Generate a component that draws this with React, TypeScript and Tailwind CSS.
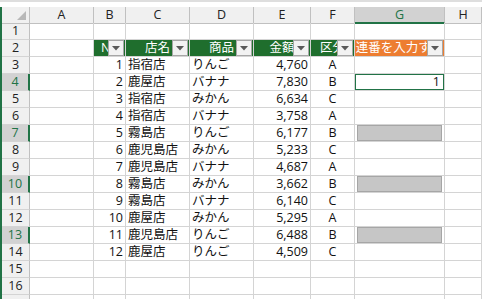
const rows = [
  [1, "指宿店", "りんご", "4,760", "A"],
  [2, "鹿屋店", "バナナ", "7,830", "B"],
  [3, "指宿店", "みかん", "6,634", "C"],
  [4, "指宿店", "バナナ", "3,758", "A"],
  [5, "霧島店", "りんご", "6,177", "B"],
  [6, "鹿児島店", "みかん", "5,233", "C"],
  [7, "鹿児島店", "バナナ", "4,687", "A"],
  [8, "霧島店", "みかん", "3,662", "B"],
  [9, "霧島店", "バナナ", "6,140", "C"],
  [10, "鹿屋店", "みかん", "5,295", "A"],
  [11, "鹿児島店", "りんご", "6,488", "B"],
  [12, "鹿屋店", "りんご", "4,509", "C"],
];

const cols = ["A", "B", "C", "D", "E", "F", "G", "H"];
const grid = "grid grid-cols-[28px_64px_32px_64px_64px_57px_44px_90px_1fr]";
const selectedRows = [4, 7, 10, 13];

const Dropdown = () => (
  <div className="absolute right-[1px] top-0 w-[16px] h-[16px] bg-[#f2f2f2] border border-[#a6a6a6] flex items-center justify-center">
    <svg width="8" height="5" viewBox="0 0 8 5">
      <path d="M0 0 L8 0 L4 4.5 Z" fill="#595959" />
    </svg>
  </div>
);

const HeadCell = ({ label, orange }: { label: string; orange?: boolean }) => (
  <div
    className={`relative h-[17px] border-b border-r border-[#d4d4d4] overflow-hidden ${
      orange ? "bg-[#ed7d31]" : "bg-[#1f6e2d]"
    }`}
  >
    <div className="h-[16px] leading-[16px] text-center text-white whitespace-nowrap">
      {label}
    </div>
    <Dropdown />
  </div>
);

const Cell = ({
  children,
  className = "",
}: {
  children?: React.ReactNode;
  className?: string;
}) => (
  <div
    className={`h-[17px] leading-[16px] border-b border-r border-[#d4d4d4] px-[2px] whitespace-nowrap overflow-hidden ${className}`}
  >
    {children}
  </div>
);

const RowHead = ({ n }: { n: number }) => {
  const sel = selectedRows.includes(n);
  return (
    <div
      className={`h-[17px] leading-[16px] text-center border-b border-[#d4d4d4] ${
        sel
          ? "bg-[#d2d2d2] text-[#217346] border-r-2 border-r-[#217346]"
          : "bg-[#f0f0f0] text-[#222] border-r border-r-[#c0c0c0]"
      }`}
    >
      {n <= 16 ? n : ""}
    </div>
  );
};

export default function App() {
  const body = [];
  for (let r = 1; r <= 17; r++) {
    const cells: React.ReactNode[] = [<RowHead key="h" n={r} />];
    cells.push(<Cell key="a" />);
    if (r === 2) {
      cells.push(<HeadCell key="b" label="No" />);
      cells.push(<HeadCell key="c" label="店名" />);
      cells.push(<HeadCell key="d" label="商品" />);
      cells.push(<HeadCell key="e" label="金額" />);
      cells.push(<HeadCell key="f" label="区分" />);
      cells.push(<HeadCell key="g" label="連番を入力する" orange />);
    } else if (r >= 3 && r <= 14) {
      const d = rows[r - 3];
      cells.push(
        <Cell key="b" className="text-right">
          {d[0]}
        </Cell>
      );
      cells.push(<Cell key="c">{d[1]}</Cell>);
      cells.push(<Cell key="d">{d[2]}</Cell>);
      cells.push(
        <Cell key="e" className="text-right">
          {d[3]}
        </Cell>
      );
      cells.push(
        <Cell key="f" className="text-center">
          {d[4]}
        </Cell>
      );
      if (r === 4) {
        cells.push(
          <Cell key="g" className="relative">
            <div className="absolute inset-[-1px] border-2 border-[#217346] text-right pr-[3px] leading-[14px]">
              1
            </div>
          </Cell>
        );
      } else if (r === 7 || r === 10 || r === 13) {
        cells.push(
          <Cell key="g" className="p-0">
            <div className="h-[16px] bg-[#c6c6c6] border border-[#a6a6a6]" />
          </Cell>
        );
      } else {
        cells.push(<Cell key="g" />);
      }
    } else {
      cells.push(<Cell key="b" />, <Cell key="c" />, <Cell key="d" />, <Cell key="e" />, <Cell key="f" />, <Cell key="g" />);
    }
    cells.push(<Cell key="hh" />);
    body.push(
      <div key={r} className={grid}>
        {cells}
      </div>
    );
  }

  return (
    <div
      className="w-[482px] h-[299px] overflow-hidden bg-white text-[12.5px] text-[#111]"
      style={{ fontFamily: '"Open Sans", "Noto Sans CJK JP", sans-serif' }}
    >
      <div className="h-[7px] border-t-2 border-[#dedede] bg-white" />
      <div className="border-l-2 border-[#217346]">
        <div className={`${grid} h-[16px]`}>
          <div className="relative bg-[#f0f0f0] border-r border-b border-[#c0c0c0]">
            <svg className="absolute right-[3px] bottom-[3px]" width="9" height="9" viewBox="0 0 9 9">
              <path d="M9 0 L9 9 L0 9 Z" fill="#b8b8b8" />
            </svg>
          </div>
          {cols.map((c) => (
            <div
              key={c}
              className={`leading-[15px] text-center ${
                c === "G"
                  ? "bg-[#d2d2d2] text-[#217346] border-b-2 border-[#217346] border-r border-r-[#c0c0c0]"
                  : "bg-[#f0f0f0] text-[#222] border-b border-r border-[#c0c0c0]"
              }`}
            >
              {c}
            </div>
          ))}
        </div>
        {body}
      </div>
    </div>
  );
}
